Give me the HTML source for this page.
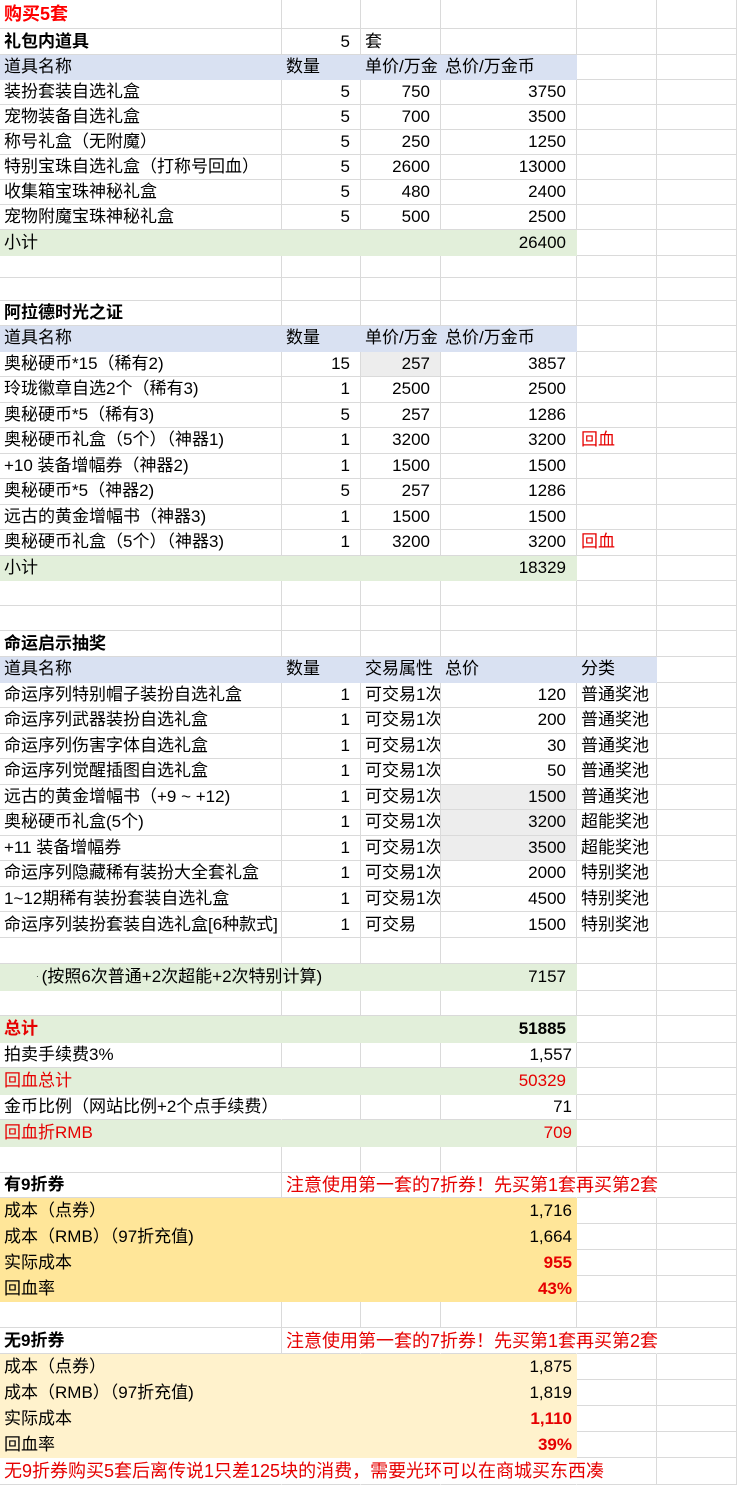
<!DOCTYPE html>
<html><head><meta charset="utf-8">
<style>
*{margin:0;padding:0;box-sizing:border-box}
body{width:737px;height:1485px;position:relative;background:#fff;overflow:hidden;font-family:"Liberation Sans","Noto Sans CJK SC",sans-serif;font-size:17px;color:#000}
.r{position:absolute;left:0;width:737px}
.c{position:absolute;top:0;height:100%;border-right:1px solid #dadada;border-bottom:1px solid #dadada;display:flex;align-items:center;white-space:nowrap;padding:0 4px;line-height:18px}
.a{left:0;width:282px}.b{left:282px;width:79px}.cc{left:361px;width:80px}.d{left:441px;width:136px}.e{left:577px;width:80px}.f{left:657px;width:80px}
.rt{justify-content:flex-end;padding-right:10px}
.rf{justify-content:flex-end;padding-right:4px}
.bl{background:#d9e1f2;border-color:transparent}
.gr{background:#e2efda;border-color:transparent}
.ye{background:#ffe699;border-color:transparent}
.ly{background:#fff2cc;border-color:transparent}
.gy{background:#ededed}
.nr{border-right-color:transparent}
.bo{font-weight:bold}
.red{color:#e60000}
.t{color:#ff0000;font-weight:bold;font-size:18px}
.clip{overflow:hidden}
.big{font-size:18px}
</style></head><body>

<div class="r" style="top:0;height:29px"><div class="c a t">购买5套</div><div class="c b"></div><div class="c cc"></div><div class="c d"></div><div class="c e"></div><div class="c f"></div></div>
<div class="r" style="top:29px;height:26px"><div class="c a bo">礼包内道具</div><div class="c b rt">5</div><div class="c cc">套</div><div class="c d"></div><div class="c e"></div><div class="c f"></div></div>
<div class="r" style="top:55px;height:25px"><div class="c a bl">道具名称</div><div class="c b bl">数量</div><div class="c cc bl">单价/万金</div><div class="c d bl">总价/万金币</div><div class="c e"></div><div class="c f"></div></div>
<div class="r" style="top:80px;height:25px"><div class="c a">装扮套装自选礼盒</div><div class="c b rt">5</div><div class="c cc rt">750</div><div class="c d rt">3750</div><div class="c e"></div><div class="c f"></div></div>
<div class="r" style="top:105px;height:25px"><div class="c a">宠物装备自选礼盒</div><div class="c b rt">5</div><div class="c cc rt">700</div><div class="c d rt">3500</div><div class="c e"></div><div class="c f"></div></div>
<div class="r" style="top:130px;height:25px"><div class="c a">称号礼盒（无附魔）</div><div class="c b rt">5</div><div class="c cc rt">250</div><div class="c d rt">1250</div><div class="c e"></div><div class="c f"></div></div>
<div class="r" style="top:155px;height:25px"><div class="c a">特别宝珠自选礼盒（打称号回血）</div><div class="c b rt">5</div><div class="c cc rt">2600</div><div class="c d rt">13000</div><div class="c e"></div><div class="c f"></div></div>
<div class="r" style="top:180px;height:25px"><div class="c a">收集箱宝珠神秘礼盒</div><div class="c b rt">5</div><div class="c cc rt">480</div><div class="c d rt">2400</div><div class="c e"></div><div class="c f"></div></div>
<div class="r" style="top:205px;height:25px"><div class="c a">宠物附魔宝珠神秘礼盒</div><div class="c b rt">5</div><div class="c cc rt">500</div><div class="c d rt">2500</div><div class="c e"></div><div class="c f"></div></div>
<div class="r" style="top:230px;height:26px"><div class="c a gr">小计</div><div class="c b gr"></div><div class="c cc gr"></div><div class="c d gr rt">26400</div><div class="c e"></div><div class="c f"></div></div>
<div class="r" style="top:256px;height:22px"><div class="c a"></div><div class="c b"></div><div class="c cc"></div><div class="c d"></div><div class="c e"></div><div class="c f"></div></div>
<div class="r" style="top:278px;height:23px"><div class="c a"></div><div class="c b"></div><div class="c cc"></div><div class="c d"></div><div class="c e"></div><div class="c f"></div></div>
<div class="r" style="top:301px;height:25px"><div class="c a bo">阿拉德时光之证</div><div class="c b"></div><div class="c cc"></div><div class="c d"></div><div class="c e"></div><div class="c f"></div></div>
<div class="r" style="top:326px;height:25.5px"><div class="c a bl">道具名称</div><div class="c b bl">数量</div><div class="c cc bl">单价/万金</div><div class="c d bl">总价/万金币</div><div class="c e"></div><div class="c f"></div></div>
<div class="r" style="top:351.5px;height:25.5px"><div class="c a">奥秘硬币*15（稀有2)</div><div class="c b rt">15</div><div class="c cc rt gy">257</div><div class="c d rt">3857</div><div class="c e"></div><div class="c f"></div></div>
<div class="r" style="top:377px;height:25.5px"><div class="c a">玲珑徽章自选2个（稀有3)</div><div class="c b rt">1</div><div class="c cc rt">2500</div><div class="c d rt">2500</div><div class="c e"></div><div class="c f"></div></div>
<div class="r" style="top:402.5px;height:25.5px"><div class="c a">奥秘硬币*5（稀有3)</div><div class="c b rt">5</div><div class="c cc rt">257</div><div class="c d rt">1286</div><div class="c e"></div><div class="c f"></div></div>
<div class="r" style="top:428px;height:25.5px"><div class="c a">奥秘硬币礼盒（5个）（神器1)</div><div class="c b rt">1</div><div class="c cc rt">3200</div><div class="c d rt">3200</div><div class="c e red">回血</div><div class="c f"></div></div>
<div class="r" style="top:453.5px;height:25.5px"><div class="c a">+10 装备增幅券（神器2)</div><div class="c b rt">1</div><div class="c cc rt">1500</div><div class="c d rt">1500</div><div class="c e"></div><div class="c f"></div></div>
<div class="r" style="top:479px;height:25.5px"><div class="c a">奥秘硬币*5（神器2)</div><div class="c b rt">5</div><div class="c cc rt">257</div><div class="c d rt">1286</div><div class="c e"></div><div class="c f"></div></div>
<div class="r" style="top:504.5px;height:25.5px"><div class="c a">远古的黄金增幅书（神器3)</div><div class="c b rt">1</div><div class="c cc rt">1500</div><div class="c d rt">1500</div><div class="c e"></div><div class="c f"></div></div>
<div class="r" style="top:530px;height:25.5px"><div class="c a">奥秘硬币礼盒（5个）（神器3)</div><div class="c b rt">1</div><div class="c cc rt">3200</div><div class="c d rt">3200</div><div class="c e red">回血</div><div class="c f"></div></div>
<div class="r" style="top:555.5px;height:25.5px"><div class="c a gr">小计</div><div class="c b gr"></div><div class="c cc gr"></div><div class="c d gr rt">18329</div><div class="c e"></div><div class="c f"></div></div>
<div class="r" style="top:581px;height:25px"><div class="c a"></div><div class="c b"></div><div class="c cc"></div><div class="c d"></div><div class="c e"></div><div class="c f"></div></div>
<div class="r" style="top:606px;height:25px"><div class="c a"></div><div class="c b"></div><div class="c cc"></div><div class="c d"></div><div class="c e"></div><div class="c f"></div></div>
<div class="r" style="top:631px;height:26px"><div class="c a bo">命运启示抽奖</div><div class="c b"></div><div class="c cc"></div><div class="c d"></div><div class="c e"></div><div class="c f"></div></div>
<div class="r" style="top:657px;height:25.5px"><div class="c a bl">道具名称</div><div class="c b bl">数量</div><div class="c cc bl">交易属性</div><div class="c d bl">总价</div><div class="c e bl">分类</div><div class="c f"></div></div>
<div class="r" style="top:682.5px;height:25.5px"><div class="c a">命运序列特别帽子装扮自选礼盒</div><div class="c b rt">1</div><div class="c cc clip">可交易1次</div><div class="c d rt">120</div><div class="c e">普通奖池</div><div class="c f"></div></div>
<div class="r" style="top:708px;height:25.5px"><div class="c a">命运序列武器装扮自选礼盒</div><div class="c b rt">1</div><div class="c cc clip">可交易1次</div><div class="c d rt">200</div><div class="c e">普通奖池</div><div class="c f"></div></div>
<div class="r" style="top:733.5px;height:25.5px"><div class="c a">命运序列伤害字体自选礼盒</div><div class="c b rt">1</div><div class="c cc clip">可交易1次</div><div class="c d rt">30</div><div class="c e">普通奖池</div><div class="c f"></div></div>
<div class="r" style="top:759px;height:25.5px"><div class="c a">命运序列觉醒插图自选礼盒</div><div class="c b rt">1</div><div class="c cc clip">可交易1次</div><div class="c d rt">50</div><div class="c e">普通奖池</div><div class="c f"></div></div>
<div class="r" style="top:784.5px;height:25.5px"><div class="c a">远古的黄金增幅书（+9 ~ +12)</div><div class="c b rt">1</div><div class="c cc clip">可交易1次</div><div class="c d rt gy">1500</div><div class="c e">普通奖池</div><div class="c f"></div></div>
<div class="r" style="top:810px;height:25.5px"><div class="c a">奥秘硬币礼盒(5个)</div><div class="c b rt">1</div><div class="c cc clip">可交易1次</div><div class="c d rt gy">3200</div><div class="c e">超能奖池</div><div class="c f"></div></div>
<div class="r" style="top:835.5px;height:25.5px"><div class="c a">+11 装备增幅券</div><div class="c b rt">1</div><div class="c cc clip">可交易1次</div><div class="c d rt gy">3500</div><div class="c e">超能奖池</div><div class="c f"></div></div>
<div class="r" style="top:861px;height:25.5px"><div class="c a">命运序列隐藏稀有装扮大全套礼盒</div><div class="c b rt">1</div><div class="c cc clip">可交易1次</div><div class="c d rt">2000</div><div class="c e">特别奖池</div><div class="c f"></div></div>
<div class="r" style="top:886.5px;height:25.5px"><div class="c a">1~12期稀有装扮套装自选礼盒</div><div class="c b rt">1</div><div class="c cc clip">可交易1次</div><div class="c d rt">4500</div><div class="c e">特别奖池</div><div class="c f"></div></div>
<div class="r" style="top:912px;height:26px"><div class="c a">命运序列装扮套装自选礼盒[6种款式]</div><div class="c b rt">1</div><div class="c cc">可交易</div><div class="c d rt">1500</div><div class="c e">特别奖池</div><div class="c f"></div></div>
<div class="r" style="top:938px;height:26px"><div class="c a"></div><div class="c b"></div><div class="c cc"></div><div class="c d"></div><div class="c e"></div><div class="c f"></div></div>
<div class="r" style="top:964px;height:27px"><div class="c b gr"></div><div class="c cc gr"></div><div class="c a gr" style="padding-left:36px;z-index:2;overflow:visible"><span style="font-size:8px;margin-right:3px">·</span>(按照6次普通+2次超能+2次特别计算)</div><div class="c d gr rt">7157</div><div class="c e"></div><div class="c f"></div></div>
<div class="r" style="top:991px;height:25px"><div class="c a"></div><div class="c b"></div><div class="c cc"></div><div class="c d"></div><div class="c e"></div><div class="c f"></div></div>
<div class="r" style="top:1016px;height:27px"><div class="c a gr red bo">总计</div><div class="c b gr"></div><div class="c cc gr"></div><div class="c d gr rt bo">51885</div><div class="c e"></div><div class="c f"></div></div>
<div class="r" style="top:1043px;height:25px"><div class="c a">拍卖手续费3%</div><div class="c b"></div><div class="c cc"></div><div class="c d rf">1,557</div><div class="c e"></div><div class="c f"></div></div>
<div class="r" style="top:1068px;height:27px"><div class="c a gr red">回血总计</div><div class="c b gr"></div><div class="c cc gr"></div><div class="c d gr rt red">50329</div><div class="c e"></div><div class="c f"></div></div>
<div class="r" style="top:1095px;height:25px"><div class="c a nr">金币比例（网站比例+2个点手续费）</div><div class="c b"></div><div class="c cc"></div><div class="c d rf">71</div><div class="c e"></div><div class="c f"></div></div>
<div class="r" style="top:1120px;height:27px"><div class="c a gr red">回血折RMB</div><div class="c b gr"></div><div class="c cc gr"></div><div class="c d gr rf red">709</div><div class="c e"></div><div class="c f"></div></div>
<div class="r" style="top:1147px;height:26px"><div class="c a"></div><div class="c b"></div><div class="c cc"></div><div class="c d"></div><div class="c e"></div><div class="c f"></div></div>
<div class="r" style="top:1173px;height:25px"><div class="c a bo">有9折券</div><div class="c cc nr"></div><div class="c d nr"></div><div class="c e nr"></div><div class="c f"></div><div class="c b nr red big" style="z-index:2">注意使用第一套的7折券！先买第1套再买第2套</div></div>
<div class="r" style="top:1198px;height:26px"><div class="c a ye">成本（点券）</div><div class="c b ye"></div><div class="c cc ye"></div><div class="c d ye rf">1,716</div><div class="c e"></div><div class="c f"></div></div>
<div class="r" style="top:1224px;height:26px"><div class="c a ye">成本（RMB）（97折充值)</div><div class="c b ye"></div><div class="c cc ye"></div><div class="c d ye rf">1,664</div><div class="c e"></div><div class="c f"></div></div>
<div class="r" style="top:1250px;height:26px"><div class="c a ye">实际成本</div><div class="c b ye"></div><div class="c cc ye"></div><div class="c d ye rf red bo">955</div><div class="c e"></div><div class="c f"></div></div>
<div class="r" style="top:1276px;height:26px"><div class="c a ye">回血率</div><div class="c b ye"></div><div class="c cc ye"></div><div class="c d ye rf red bo">43%</div><div class="c e"></div><div class="c f"></div></div>
<div class="r" style="top:1302px;height:26px"><div class="c a"></div><div class="c b"></div><div class="c cc"></div><div class="c d"></div><div class="c e"></div><div class="c f"></div></div>
<div class="r" style="top:1328px;height:26px"><div class="c a bo">无9折券</div><div class="c cc nr"></div><div class="c d nr"></div><div class="c e nr"></div><div class="c f"></div><div class="c b nr red big" style="z-index:2">注意使用第一套的7折券！先买第1套再买第2套</div></div>
<div class="r" style="top:1354px;height:26px"><div class="c a ly">成本（点券）</div><div class="c b ly"></div><div class="c cc ly"></div><div class="c d ly rf">1,875</div><div class="c e"></div><div class="c f"></div></div>
<div class="r" style="top:1380px;height:26px"><div class="c a ly">成本（RMB）（97折充值)</div><div class="c b ly"></div><div class="c cc ly"></div><div class="c d ly rf">1,819</div><div class="c e"></div><div class="c f"></div></div>
<div class="r" style="top:1406px;height:26px"><div class="c a ly">实际成本</div><div class="c b ly"></div><div class="c cc ly"></div><div class="c d ly rf red bo">1,110</div><div class="c e"></div><div class="c f"></div></div>
<div class="r" style="top:1432px;height:26px"><div class="c a ly">回血率</div><div class="c b ly"></div><div class="c cc ly"></div><div class="c d ly rf red bo">39%</div><div class="c e"></div><div class="c f"></div></div>
<div class="r" style="top:1458px;height:27px"><div class="c b nr"></div><div class="c cc nr"></div><div class="c d nr"></div><div class="c e"></div><div class="c f"></div><div class="c a nr red big" style="z-index:2">无9折券购买5套后离传说1只差125块的消费，需要光环可以在商城买东西凑</div></div>

</body></html>
